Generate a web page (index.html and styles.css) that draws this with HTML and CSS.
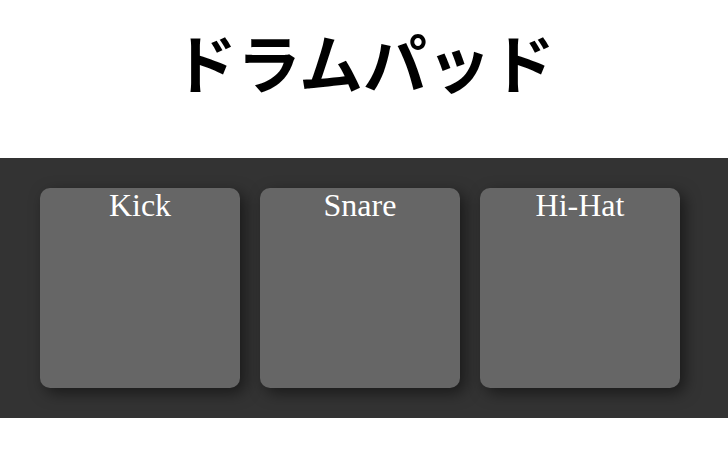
FILE: index.html
```html
<!DOCTYPE html>
<html lang="ja">
<head>
  <meta charset="UTF-8" />
  <meta name="viewport" content="width=device-width, initial-scale=1.0"/>
  <title>ドラムパッド</title>
  <link rel="stylesheet" href="styles.css">
</head>
<body>
  <h1 class="title">ドラムパッド</h1>

  <div class="pad-row">
    <div class="pad" data-sound="kick">Kick</div>
    <div class="pad" data-sound="snare">Snare</div>
    <div class="pad" data-sound="hihat">Hi-Hat</div>
  </div>
</body>
</html>
```

FILE: styles.css
```css
body {
  font-family: "Liberation Serif", "Noto Sans CJK JP", serif;
  background-color: white;
  margin: 0;
}

.title {
  font-family: "Liberation Serif", "Noto Sans CJK JP", serif;
  font-size: 64px;
  font-weight: bold;
  line-height: 1;
  text-align: center;
  margin: 0;
  padding: 35px 0 59px;
}

.pad-row {
  display: flex;
  gap: 20px;
  padding: 30px 40px;
  background-color: #333;
}

.pad {
  width: 200px;
  height: 200px;
  flex: none;
  line-height: 1.1;
  background-color: #666;
  color: white;
  font-size: 32px;
  text-align: center;
  border-radius: 10px;
  box-shadow: 5px 5px 15px rgba(0, 0, 0, 0.5);
  cursor: pointer;
}
```
